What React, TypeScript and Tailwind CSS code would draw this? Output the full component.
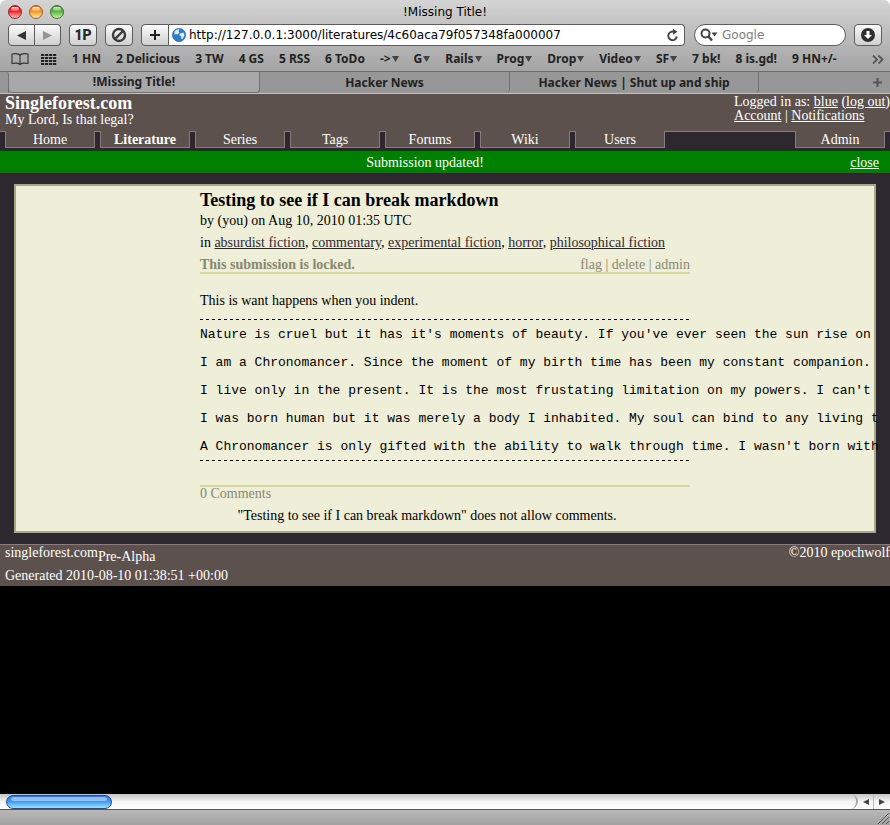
import type { ReactNode } from "react";

const serif = "font-['Liberation_Serif',serif]";

const bookmarks: { label: string; menu?: boolean }[] = [
  { label: "1 HN" },
  { label: "2 Delicious" },
  { label: "3 TW" },
  { label: "4 GS" },
  { label: "5 RSS" },
  { label: "6 ToDo" },
  { label: "->", menu: true },
  { label: "G", menu: true },
  { label: "Rails", menu: true },
  { label: "Prog", menu: true },
  { label: "Drop", menu: true },
  { label: "Video", menu: true },
  { label: "SF", menu: true },
  { label: "7 bk!" },
  { label: "8 is.gd!" },
  { label: "9 HN+/-" },
];

const sections = ["Home", "Literature", "Series", "Tags", "Forums", "Wiki", "Users"];

const genres = ["absurdist fiction", "commentary", "experimental fiction", "horror", "philosophical fiction"];

const story = [
  "Nature is cruel but it has it's moments of beauty. If you've ever seen the sun rise on",
  "I am a Chronomancer. Since the moment of my birth time has been my constant companion.",
  "I live only in the present. It is the most frustating limitation on my powers. I can't",
  "I was born human but it was merely a body I inhabited. My soul can bind to any living t",
  "A Chronomancer is only gifted with the ability to walk through time. I wasn't born with",
];

function ToolButton({ label, className, children }: { label: string; className: string; children: ReactNode }) {
  return (
    <button
      type="button"
      aria-label={label}
      className={`flex h-[22px] shrink-0 items-center justify-center border border-[#5c5c5c] bg-linear-to-b from-[#fbfbfb] to-[#cfcfcf] ${className}`}
    >
      {children}
    </button>
  );
}

function Light({ label, className }: { label: string; className: string }) {
  return (
    <button
      type="button"
      aria-label={label}
      className={`flex size-[14px] justify-center rounded-full border pt-px ${className}`}
    >
      <span className="h-1 w-2 rounded-full bg-linear-to-b from-white/80 to-white/20" />
    </button>
  );
}

function Triangle() {
  return (
    <svg width="7" height="6" viewBox="0 0 7 6" aria-hidden="true">
      <path d="M0 0h7L3.5 6z" fill="#444" />
    </svg>
  );
}

function BrowserChrome() {
  return (
    <header className="shrink-0 font-['DejaVu_Sans',sans-serif] text-[#222]">
      <div className="rounded-t-md bg-linear-to-b from-[#d4d4d4] to-[#a4a4a4]">
        <div className="relative flex h-6 items-center gap-[7px] px-2">
          <Light label="Close" className="border-[#8e2a2a] bg-linear-to-b from-[#c8101c] via-[#f02c38] to-[#ffb0b0]" />
          <Light label="Minimize" className="border-[#a05f1c] bg-linear-to-b from-[#e0701a] via-[#f6a030] to-[#ffe89a]" />
          <Light label="Zoom" className="border-[#3f7430] bg-linear-to-b from-[#3c9030] via-[#62b848] to-[#c8f4a0]" />
          <h1 className="pointer-events-none absolute inset-x-0 text-center text-xs text-black">!Missing Title!</h1>
        </div>
        <div className="flex h-[22px] items-center pr-2 pl-2">
          <ToolButton label="Back" className="w-[27px] rounded-l">
            <svg width="9" height="9" viewBox="0 0 10 10"><path d="M10 0v10L0 5z" fill="#333" /></svg>
          </ToolButton>
          <ToolButton label="Forward" className="w-[26px] rounded-r border-l-0">
            <svg width="9" height="9" viewBox="0 0 10 10"><path d="M0 0v10l10-5z" fill="#949494" /></svg>
          </ToolButton>
          <ToolButton label="1Password" className="ml-2 w-7 rounded">
            <span className="font-[Roboto,sans-serif] text-sm leading-none font-black text-[#2a2a2a]">1P</span>
          </ToolButton>
          <ToolButton label="Block" className="ml-2 w-7 rounded">
            <svg width="16" height="16" viewBox="0 0 16 16" fill="none" stroke="#3a3a3a" strokeWidth="2.4">
              <circle cx="8" cy="8" r="6" /><path d="M4 12l8-8" />
            </svg>
          </ToolButton>
          <ToolButton label="Add bookmark" className="ml-2 w-7 rounded-l">
            <svg width="10" height="10" viewBox="0 0 10 10"><path d="M5 0v10M0 5h10" stroke="#222" strokeWidth="2" /></svg>
          </ToolButton>
          <div className="flex h-[22px] min-w-0 flex-1 items-center gap-[3px] rounded-r border border-l-0 border-[#5c5c5c] bg-white pr-1 pl-[3px]">
            <svg className="shrink-0" width="14" height="14" viewBox="0 0 14 14" aria-hidden="true">
              <circle cx="7" cy="7" r="6.600" fill="#2f7ac9" stroke="#3c6ea5" strokeWidth=".8" />
              <path d="M2.500 3.500c2-2 4-2.500 5-2l-1 2 1 1-2 2-2-.5-1 1zM8 5.500l3.500-1 1 3-2 3.500-1.500-.5.500-2-2-1z" fill="#dff0fb" />
            </svg>
            <input
              aria-label="Address"
              defaultValue="http://127.0.0.1:3000/literatures/4c60aca79f057348fa000007"
              className="min-w-0 flex-1 text-xs text-black outline-none"
            />
            <button type="button" aria-label="Reload">
              <svg width="15" height="15" viewBox="0 0 15 15" fill="none" stroke="#444" strokeWidth="1.900">
                <path d="M9.500 4A4.300 4.300 0 1 0 11.800 8.500" />
                <path d="M8 .8v6l4.500-3z" fill="#444" stroke="none" />
              </svg>
            </button>
          </div>
          <label className="ml-[9px] flex h-[22px] w-[152px] shrink-0 items-center gap-1 rounded-full border border-[#5c5c5c] bg-white pl-[5px]">
            <svg className="shrink-0" width="18" height="14" viewBox="0 0 18 14" aria-hidden="true">
              <circle cx="5.500" cy="5.500" r="4" fill="none" stroke="#444" strokeWidth="2" />
              <path d="M8.500 8.500l3.500 4" stroke="#444" strokeWidth="2.500" />
              <path d="M11.500 4.500h6l-3 4z" fill="#444" />
            </svg>
            <input aria-label="Search" placeholder="Google" className="min-w-0 flex-1 text-xs outline-none placeholder:text-[#808080]" />
          </label>
          <ToolButton label="Downloads" className="ml-2 w-7 rounded">
            <svg width="14" height="14" viewBox="0 0 14 14">
              <circle cx="7" cy="7" r="7" fill="#2e2e2e" />
              <path d="M5.500 3h3v4h2.500l-4 4-4-4h2.500z" fill="#fff" />
            </svg>
          </ToolButton>
        </div>
        <nav aria-label="Bookmarks" className="flex h-[25px] items-center pt-px pr-[6px] pl-[11px] font-['Noto_Sans',sans-serif] text-xs font-bold whitespace-nowrap">
          <button type="button" aria-label="Show bookmarks" className="shrink-0">
            <svg width="18" height="13" viewBox="0 0 18 13" fill="none" stroke="#333" strokeWidth="1.100">
              <path d="M9 2.500C8 .5 4 .5 1 1v9.500c3-.5 6.500-.5 8 1 1.500-1.500 5-1.500 8-1V1C14 .5 10 .5 9 2.500zM9 2.500v9" />
            </svg>
          </button>
          <button type="button" aria-label="Top sites" className="ml-3 shrink-0">
            <svg width="16" height="11" viewBox="0 0 16 11" fill="#222">
              {[0, 4, 8, 12].map((x) => [0, 3, 6, 9].map((y) => <rect key={`${x}-${y}`} x={x} y={y} width="3.200" height="2" />))}
            </svg>
          </button>
          <div className="ml-[15px] flex flex-1 gap-[15px]">
            {bookmarks.map((b) => (
              <a key={b.label} href="#" className="flex items-center gap-px">
                {b.label}
                {b.menu && <Triangle />}
              </a>
            ))}
          </div>
          <button type="button" aria-label="More bookmarks">
            <svg width="12" height="9" viewBox="0 0 12 9" fill="none" stroke="#555" strokeWidth="1.800">
              <path d="M1 .5l4 4-4 4M6.500 .5l4 4-4 4" />
            </svg>
          </button>
        </nav>
      </div>
      <div role="tablist" className="flex h-[23px] border-t border-b border-t-[#6d6d6d] border-b-[#c3c3c3] bg-[#979797] font-['Noto_Sans',sans-serif] text-xs font-bold">
        <span className="w-[9px] rounded-tr border-r border-[#707070]" />
        <button type="button" role="tab" aria-selected="true" className="w-[251px] rounded-b border-r border-b border-[#707070] bg-[#a8a8a8]">
          !Missing Title!
        </button>
        <button type="button" role="tab" aria-selected="false" className="w-[250px] rounded-br border-r border-[#707070]">
          Hacker News
        </button>
        <button type="button" role="tab" aria-selected="false" className="w-[249px] rounded-br border-r border-[#707070]">
          Hacker News | Shut up and ship
        </button>
        <span className="flex-1" />
        <button type="button" aria-label="New tab" className="pr-2">
          <svg width="9" height="9" viewBox="0 0 9 9"><path d="M4.500 0v9M0 4.500h9" stroke="#555" strokeWidth="2" /></svg>
        </button>
      </div>
    </header>
  );
}

function NavTab({ label, current }: { label: string; current?: boolean }) {
  return (
    <a
      href="#"
      className={`-mt-px flex h-[17px] w-[90px] items-center justify-center border-x border-b border-[#8b7a80] bg-[#5d514e] pt-[2px] leading-[14px] ${current ? "font-bold" : ""}`}
    >
      {label}
    </a>
  );
}

function SiteHeader() {
  return (
    <div className="text-white">
      <div className="flex h-[37px] justify-between bg-[#5d514e] pl-[5px] leading-[14px]">
        <div>
          <h2 className="text-lg leading-[19px] font-bold">Singleforest.com</h2>
          <p>My Lord, Is that legal?</p>
        </div>
        <div className="pt-px whitespace-nowrap">
          <p>
            Logged in as: <a href="#" className="underline">blue</a> (<a href="#" className="underline">log out</a>)
          </p>
          <p>
            <a href="#" className="underline">Account</a> | <a href="#" className="underline">Notifications</a>
          </p>
        </div>
      </div>
      <nav aria-label="Site" className="flex h-5 justify-between border-t border-[#8b7a80] px-[5px]">
        <div className="flex gap-[5px]">
          {sections.map((s) => (
            <NavTab key={s} label={s} current={s === "Literature"} />
          ))}
        </div>
        <NavTab label="Admin" />
      </nav>
      <div role="status" className="flex h-[22px] items-center bg-[#008000] pt-px pr-[11px]">
        <p className="flex-1 text-center">Submission updated!</p>
        <a href="#" className="underline">close</a>
      </div>
    </div>
  );
}

function Submission() {
  return (
    <main className="mx-[14px] my-[11px] border-2 border-[#a8a888] bg-[#efeed8] pb-1 text-black">
      <article className="mx-auto w-[490px] leading-[22px]">
        <h3 className="pt-[3px] text-lg leading-[23px] font-bold">Testing to see if I can break markdown</h3>
        <p className="leading-[18px]">by (you) on Aug 10, 2010 01:35 UTC</p>
        <p className="pt-[2px]">
          in{" "}
          {genres.map((g, i) => (
            <span key={g}>
              {i > 0 && ", "}
              <a href="#" className="text-[#2d2830] underline">{g}</a>
            </span>
          ))}
        </p>
        <div className="mt-1 flex justify-between border-b-2 border-[#d8d6a0] leading-[14px] text-[#888870]">
          <strong>This submission is locked.</strong>
          <p>
            <a href="#">flag</a> | <a href="#">delete</a> | <a href="#">admin</a>
          </p>
        </div>
        <p className="mt-4">This is want happens when you indent.</p>
        <div className="mt-[7px] h-px bg-[repeating-linear-gradient(90deg,#000_0_3px,transparent_3px_6px)]" />
        <pre className="h-[140px] pt-px font-['Liberation_Mono',monospace] text-[13px] leading-7">{story.join("\n")}</pre>
        <div className="h-px bg-[repeating-linear-gradient(90deg,#000_0_3px,transparent_3px_6px)]" />
        <section className="mt-6 border-t-2 border-[#d8d6a0]">
          <h4 className="leading-[14px] text-[#888870]">0 Comments</h4>
          <p className="mt-1 pr-9 text-center">
            &quot;Testing to see if I can break markdown&quot; does not allow comments.
          </p>
        </section>
      </article>
    </main>
  );
}

function SiteFooter() {
  return (
    <footer className="flex justify-between border-t border-[#8b7a80] bg-[#5d514e] pl-[5px] text-white">
      <div>
        <p className="flex leading-4">
          singleforest.com<span className="pt-1">Pre-Alpha</span>
        </p>
        <p className="leading-[21px]">Generated 2010-08-10 01:38:51 +00:00</p>
      </div>
      <p className="leading-4">©2010 epochwolf</p>
    </footer>
  );
}

function WindowBottom() {
  return (
    <div className="shrink-0">
      <div className="flex h-[15px] bg-linear-to-b from-[#c4c4c4] via-[#f4f4f4] to-white">
        <div className="flex flex-1 items-center rounded-r-full border-r-2 border-[#a8a8a8] pl-[6px]">
          <div className="flex h-[14px] w-[106px] justify-center rounded-full border border-[#1f4f9c] bg-linear-to-b from-[#2f74dc] via-[#4b9cf0] to-[#98e4ff] pt-px">
            <span className="h-1 w-24 rounded-sm bg-white/45" />
          </div>
        </div>
        <button type="button" aria-label="Scroll left" className="flex w-4 items-center justify-center border-r border-[#bbb]">
          <svg width="6" height="6" viewBox="0 0 6 6"><path d="M6 0v6L0 3z" fill="#444" /></svg>
        </button>
        <button type="button" aria-label="Scroll right" className="flex w-4 items-center justify-center">
          <svg width="6" height="6" viewBox="0 0 6 6"><path d="M0 0v6l6-3z" fill="#444" /></svg>
        </button>
      </div>
      <div className="flex h-4 items-end justify-end border-t border-[#555] bg-linear-to-b from-[#b8b8b8] to-[#a2a2a2] p-px">
        <svg width="11" height="11" viewBox="0 0 11 11" stroke="#555" aria-hidden="true">
          <path d="M0 11L11 0M4 11l7-7M8 11l3-3" />
        </svg>
      </div>
    </div>
  );
}

export default function App() {
  return (
    <div className="flex h-screen flex-col overflow-hidden bg-white">
      <BrowserChrome />
      <div className={`min-h-0 flex-1 overflow-hidden bg-black text-sm ${serif}`}>
        <div className="flow-root bg-[#2d2830]">
          <SiteHeader />
          <Submission />
          <SiteFooter />
        </div>
      </div>
      <WindowBottom />
    </div>
  );
}
